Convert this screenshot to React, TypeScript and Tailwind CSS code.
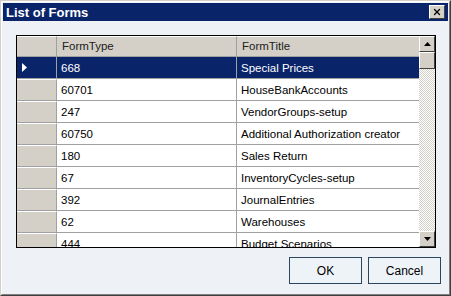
import { X } from "lucide-react";

const rows: [string, string][] = [
  ["668", "Special Prices"],
  ["60701", "HouseBankAccounts"],
  ["247", "VendorGroups-setup"],
  ["60750", "Additional Authorization creator"],
  ["180", "Sales Return"],
  ["67", "InventoryCycles-setup"],
  ["392", "JournalEntries"],
  ["62", "Warehouses"],
  ["444", "Budget Scenarios"],
];

function Arrow({ down }: { down?: boolean }) {
  return (
    <svg width="7" height="4" viewBox="0 0 7 4" className={down ? "rotate-180" : ""}>
      <path d="M3.5 0 L7 4 L0 4 Z" fill="#000" />
    </svg>
  );
}

export default function App() {
  return (
    <div
      className="w-[451px] h-[296px] flex flex-col bg-[#eef2f6] border border-t-[#d4d0c8] border-l-[#d4d0c8] border-r-[#404040] border-b-[#404040] overflow-hidden"
      style={{ fontFamily: "'Liberation Sans', Arial, sans-serif" }}
    >
      <div className="flex-1 flex flex-col border border-t-white border-l-white border-r-[#808080] border-b-[#808080] p-px">
        {/* title bar */}
        <div className="h-[18px] bg-[#0a246a] flex items-center justify-between pl-[3px] pr-[3px]">
          <span className="text-white font-bold text-[13px] leading-none">List of Forms</span>
          <div className="w-[16px] h-[14px] bg-[#d4d0c8] border border-t-white border-l-white border-r-[#404040] border-b-[#404040] flex items-center justify-center">
            <X size={10} strokeWidth={3} color="#000" />
          </div>
        </div>

        {/* grid */}
        <div className="mt-[14px] ml-[13px] w-[420px] h-[213px] border border-black flex overflow-hidden bg-white text-[11.5px] text-black">
          <div className="flex-1 flex flex-col">
            <div className="h-[21px] flex shrink-0 bg-[#d4d0c8]">
              <div className="w-[40px] border-t border-white border-r border-r-[#a0a0a0] border-b border-b-[#a0a0a0]" />
              <div className="w-[180px] border-t border-white border-r border-r-[#a0a0a0] border-b border-b-[#a0a0a0] flex items-center pl-[5px] pt-px text-[#202020]">FormType</div>
              <div className="flex-1 border-t border-white border-b border-b-[#a0a0a0] flex items-center pl-[5px] pt-px text-[#202020]">FormTitle</div>
            </div>
            {rows.map(([t, title], i) => {
              const sel = i === 0;
              return (
                <div key={t} className="h-[22px] flex shrink-0">
                  <div
                    className={`w-[40px] border-r border-r-[#a0a0a0] border-b border-b-[#a0a0a0] flex items-center pl-[5px] ${
                      sel ? "bg-[#0a246a]" : "bg-[#d4d0c8] border-t border-t-white"
                    }`}
                  >
                    {sel && (
                      <svg width="5" height="9" viewBox="0 0 5 9">
                        <path d="M0 0 L5 4.5 L0 9 Z" fill="#fff" />
                      </svg>
                    )}
                  </div>
                  <div
                    className={`w-[180px] border-r border-r-[#a0a0a0] border-b border-b-[#a0a0a0] flex items-center pl-[4px] pt-[2px] ${
                      sel ? "bg-[#0a246a] text-white" : ""
                    }`}
                  >
                    {t}
                  </div>
                  <div
                    className={`flex-1 border-b border-b-[#a0a0a0] flex items-center pl-[4px] pt-[2px] ${
                      sel ? "bg-[#0a246a] text-white" : ""
                    }`}
                  >
                    {title}
                  </div>
                </div>
              );
            })}
          </div>

          {/* scrollbar */}
          <div className="w-[16px] flex flex-col bg-[repeating-conic-gradient(#d4d0c8_0%_25%,#ffffff_0%_50%)] bg-[length:2px_2px]">
            <div className="h-[16px] bg-[#d4d0c8] border border-t-white border-l-white border-r-[#404040] border-b-[#404040] flex items-center justify-center">
              <Arrow />
            </div>
            <div className="h-[17px] bg-[#d4d0c8] border border-t-white border-l-white border-r-[#404040] border-b-[#404040]" />
            <div className="flex-1" />
            <div className="h-[16px] bg-[#d4d0c8] border border-t-white border-l-white border-r-[#404040] border-b-[#404040] flex items-center justify-center">
              <Arrow down />
            </div>
          </div>
        </div>

        {/* buttons */}
        <div className="flex justify-end gap-[6px] mt-[9px] mr-[7px]">
          <button className="w-[73px] h-[27px] border border-[#2c4560] bg-[#eef3f8] text-[12px] text-black">OK</button>
          <button className="w-[73px] h-[27px] border border-[#2c4560] bg-[#eef3f8] text-[12px] text-black">Cancel</button>
        </div>
      </div>
    </div>
  );
}
